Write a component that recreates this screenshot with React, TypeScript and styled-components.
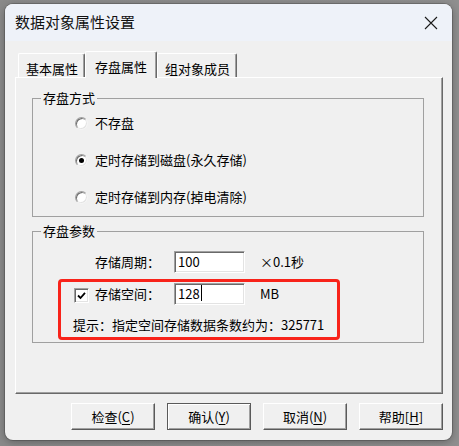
import React from "react";
import styled, { createGlobalStyle } from "styled-components";

const Global = createGlobalStyle`
  html, body { margin: 0; padding: 0; background: #8d8d8d; }
  body { font-family: "Noto Sans CJK SC", "Noto Sans", sans-serif; color: #000; }
  * { box-sizing: border-box; }
`;

const Page = styled.div`
  width: 459px;
  height: 446px;
  overflow: hidden;
  padding: 4px 0 0 5px;
  background: linear-gradient(90deg, #8a8a8a 0%, #8f8f8f 100%);
`;

const Dialog = styled.div`
  width: 447px;
  height: 436px;
  border-radius: 8px;
  overflow: hidden;
  background: #f0f0f0;
  box-shadow: 0 0 0 1px rgba(0, 0, 0, 0.18), 0 2px 8px rgba(0, 0, 0, 0.3);
  display: flex;
  flex-direction: column;
`;

const TitleBar = styled.div`
  height: 37px;
  flex: none;
  background: #eef2f9;
  display: flex;
  align-items: center;
  justify-content: space-between;
  padding: 0 14px 0 10px;
`;

const Title = styled.span`
  font-size: 15px;
  line-height: 20px;
  color: #111;
  margin-top: -1px;
`;

const CloseIcon = styled.svg`
  width: 14px;
  height: 14px;
  display: block;
`;

const Body = styled.div`
  padding: 10px 9px 10px 10px;
  display: flex;
  flex-direction: column;
`;

const TabRow = styled.div`
  height: 26px;
  display: flex;
  align-items: flex-end;
  padding-left: 3px;
  position: relative;
  z-index: 1;
`;

const Tab = styled.div<{ $active?: boolean }>`
  height: ${(p) => (p.$active ? 27 : 24)}px;
  margin-bottom: ${(p) => (p.$active ? -1 : 0)}px;
  padding: 7px ${(p) => (p.$active ? 9 : 6)}px 0 ${(p) => (p.$active ? 9 : 7)}px;
  font-size: 13px;
  line-height: 16px;
  white-space: nowrap;
  background: #f0f0f0;
  border-top: 1px solid #fff;
  border-left: 1px solid #fff;
  border-right: 1px solid #696969;
  box-shadow: inset -1px 0 0 #a0a0a0;
  border-radius: 2px 2px 0 0;
`;

const Panel = styled.div`
  height: 317px;
  border-top: 1px solid #fff;
  border-left: 1px solid #fff;
  border-right: 1px solid #696969;
  border-bottom: 1px solid #696969;
  box-shadow: inset -1px -1px 0 #a0a0a0;
  padding: 12px 18px 0 16px;
`;

const Group = styled.fieldset<{ $gap?: number }>`
  margin: ${(p) => p.$gap ?? 0}px 0 0 0;
  padding: 0;
  border: 1px solid #a0a0a0;
  min-width: 0;
`;

const Legend = styled.legend`
  font-size: 13px;
  line-height: 16px;
  padding: 0 2px;
  margin-left: 8px;
`;

const RadioList = styled.div`
  display: flex;
  flex-direction: column;
  gap: 17px;
  padding: 7px 0 9px 42px;
`;

const RadioRow = styled.div`
  height: 20px;
  display: flex;
  align-items: center;
  gap: 7px;
  font-size: 13px;
  line-height: 16px;
`;

const RadioDot = styled.span<{ $checked?: boolean }>`
  width: 13px;
  height: 13px;
  flex: none;
  border-radius: 50%;
  border: 1px solid;
  border-color: #a0a0a0 #f4f4f4 #f4f4f4 #a0a0a0;
  background: #fff;
  box-shadow: inset 1px 1px 0 #6f6f6f, inset -1px -1px 0 #e3e3e3;
  display: flex;
  align-items: center;
  justify-content: center;
  &::after {
    content: "";
    display: ${(p) => (p.$checked ? "block" : "none")};
    width: 5px;
    height: 5px;
    border-radius: 50%;
    background: #000;
  }
`;

const ParamBody = styled.div`
  padding: 12px 0 2px 0;
  display: flex;
  flex-direction: column;
`;

const FieldRow = styled.div<{ $indent?: number }>`
  height: 22px;
  display: flex;
  align-items: center;
  margin-left: ${(p) => p.$indent ?? 0}px;
  font-size: 13px;
  line-height: 16px;
`;

const FieldLabel = styled.span`
  width: 79px;
  flex: none;
`;

const TextBox = styled.div`
  width: 71px;
  height: 22px;
  flex: none;
  background: #fff;
  border-top: 1px solid #a0a0a0;
  border-left: 1px solid #a0a0a0;
  border-right: 1px solid #fff;
  border-bottom: 1px solid #fff;
  box-shadow: inset 1px 1px 0 #696969, inset -1px -1px 0 #e3e3e3;
  padding: 1px 0 0 3px;
  font-size: 13px;
  line-height: 17px;
  display: flex;
  align-items: flex-start;
`;

const Caret = styled.span`
  width: 1px;
  height: 16px;
  background: #000;
  margin-left: 1px;
`;

const Unit = styled.span`
  margin-left: 15px;
  font-size: 13px;
`;

const Highlight = styled.div`
  margin: 6px 0 0 25px;
  width: 282px;
  border: 3px solid #f8231a;
  border-radius: 4px;
  padding: 1px 0 4px 13px;
  display: flex;
  flex-direction: column;
`;

const CheckBox = styled.span`
  width: 15px;
  height: 15px;
  flex: none;
  margin: 3px 6px 0 0;
  background: #fff;
  border-top: 1px solid #a0a0a0;
  border-left: 1px solid #a0a0a0;
  border-right: 1px solid #fff;
  border-bottom: 1px solid #fff;
  box-shadow: inset 1px 1px 0 #696969, inset -1px -1px 0 #e3e3e3;
  display: flex;
  align-items: center;
  justify-content: center;
`;

const Hint = styled.div`
  margin: 12px 0 0 -1px;
  font-size: 13px;
  line-height: 16px;
  white-space: nowrap;
`;

const ButtonRow = styled.div`
  margin-top: 9px;
  display: flex;
  justify-content: flex-end;
  gap: 12px;
`;

const Button = styled.div<{ $default?: boolean }>`
  width: 84px;
  height: 27px;
  display: flex;
  align-items: center;
  justify-content: center;
  font-size: 13px;
  line-height: 16px;
  background: #f0f0f0;
  border-top: 1px solid ${(p) => (p.$default ? "#5a5a5a" : "#fff")};
  border-left: 1px solid ${(p) => (p.$default ? "#5a5a5a" : "#fff")};
  border-right: 1px solid #5a5a5a;
  border-bottom: 1px solid #5a5a5a;
  box-shadow: ${(p) =>
    p.$default
      ? "inset 1px 1px 0 #fff, inset -1px -1px 0 #a0a0a0"
      : "inset -1px -1px 0 #a0a0a0"};
  u { text-underline-offset: 2px; }
`;

export default function App() {
  return (
    <>
      <Global />
      <Page>
        <Dialog>
          <TitleBar>
            <Title>数据对象属性设置</Title>
            <CloseIcon viewBox="0 0 14 14">
              <path d="M1 1 L13 13 M13 1 L1 13" stroke="#1b1b1b" strokeWidth="1.1" fill="none" />
            </CloseIcon>
          </TitleBar>
          <Body>
            <TabRow>
              <Tab>基本属性</Tab>
              <Tab $active>存盘属性</Tab>
              <Tab>组对象成员</Tab>
            </TabRow>
            <Panel>
              <Group>
                <Legend>存盘方式</Legend>
                <RadioList>
                  <RadioRow>
                    <RadioDot />
                    不存盘
                  </RadioRow>
                  <RadioRow>
                    <RadioDot $checked />
                    定时存储到磁盘(永久存储)
                  </RadioRow>
                  <RadioRow>
                    <RadioDot />
                    定时存储到内存(掉电清除)
                  </RadioRow>
                </RadioList>
              </Group>
              <Group $gap={6}>
                <Legend>存盘参数</Legend>
                <ParamBody>
                  <FieldRow $indent={62}>
                    <FieldLabel>存储周期：</FieldLabel>
                    <TextBox>100</TextBox>
                    <Unit>×0.1秒</Unit>
                  </FieldRow>
                  <Highlight>
                    <FieldRow>
                      <CheckBox>
                        <svg width="9" height="9" viewBox="0 0 9 9">
                          <path d="M1 4.5 L3.5 7 L8 1.8" stroke="#000" strokeWidth="1.8" fill="none" />
                        </svg>
                      </CheckBox>
                      <FieldLabel>存储空间：</FieldLabel>
                      <TextBox>
                        128
                        <Caret />
                      </TextBox>
                      <Unit>MB</Unit>
                    </FieldRow>
                    <Hint>提示：指定空间存储数据条数约为：325771</Hint>
                  </Highlight>
                </ParamBody>
              </Group>
            </Panel>
            <ButtonRow>
              <Button>
                检查(<u>C</u>)
              </Button>
              <Button $default>
                确认(<u>Y</u>)
              </Button>
              <Button>
                取消(<u>N</u>)
              </Button>
              <Button>
                帮助[<u>H</u>]
              </Button>
            </ButtonRow>
          </Body>
        </Dialog>
      </Page>
    </>
  );
}
